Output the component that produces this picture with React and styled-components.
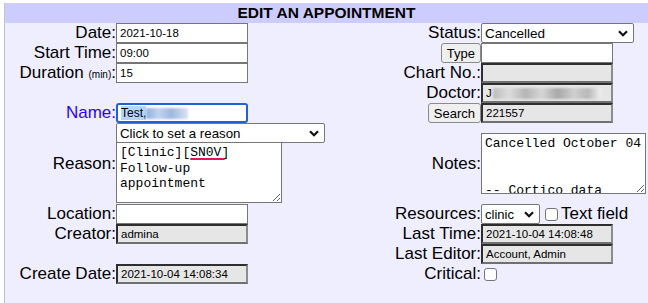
import styled, { createGlobalStyle } from "styled-components";

const Global = createGlobalStyle`
  body {
    margin: 0;
    background: #ffffff;
    font-family: "Liberation Sans", Arial, sans-serif;
    overflow: hidden;
  }
`;

const Page = styled.div`
  padding: 3px 0 0 4px;
`;

const Panel = styled.div`
  border-left: 1px solid #c4c4c4;
  background: #eeeeff;
  min-height: 320px;
`;

const Header = styled.div`
  height: 20px;
  background: #ccccff;
  font-weight: bold;
  font-size: 15.5px;
  line-height: 20px;
  text-align: center;
`;

const Form = styled.div`
  display: grid;
  grid-template-columns: 111px 215px 150px 1fr;
  grid-auto-rows: minmax(20px, auto);
  align-items: center;
`;

const Label = styled.div`
  height: 20px;
  text-align: right;
  font-size: 17px;
  line-height: 20px;
  color: ${(p) => (p.$accent ? "#2a00ff" : "#000")};
  white-space: nowrap;
`;

const Small = styled.span`
  font-size: 10px;
  line-height: 0;
`;

const Field = styled.div`
  display: flex;
  flex-direction: ${(p) => (p.$stack ? "column" : "row")};
  align-items: ${(p) => (p.$stack ? "flex-start" : "center")};
`;

const Input = styled.input`
  box-sizing: border-box;
  width: ${(p) => p.$w || 132}px;
  height: 20px;
  margin: 0;
  padding: 0 3px;
  font-family: "Liberation Sans", Arial, sans-serif;
  font-size: 11.5px;
  color: #000;
  background: #fff;
  border: 1px solid #767676;
  outline: none;
`;

const ReadOnly = styled.div`
  box-sizing: border-box;
  width: 132px;
  height: 20px;
  padding: 0 3px;
  display: flex;
  align-items: center;
  gap: 1px;
  font-size: 11.5px;
  background: #e6e6e6;
  border: 2px solid;
  border-color: #2e2e2e #8c8c8c #707070 #2e2e2e;
  white-space: nowrap;
  overflow: hidden;
`;

const NameBox = styled.div`
  box-sizing: border-box;
  width: 132px;
  height: 20px;
  padding: 0 3px;
  display: flex;
  align-items: center;
  font-size: 12px;
  background: #fff;
  border: 2px solid #1c63d6;
  border-radius: 3px;
`;

const Selected = styled.span`
  background: #b7d4fb;
  display: flex;
  align-items: center;
  height: 14px;
`;

const Blur = styled.span`
  display: inline-block;
  width: ${(p) => p.$w}px;
  height: 11px;
  background: ${(p) =>
    p.$blue
      ? "linear-gradient(90deg,#8fb0e0 0%,#c0d4f0 30%,#9eb8de 60%,#d8e4f6 100%)"
      : "linear-gradient(90deg,#bdbdbd 0%,#dcdcdc 15%,#b5b5b5 30%,#d6d6d6 45%,#a8a8a8 60%,#cfcfcf 75%,#b8b8b8 88%,#f0f0f0 100%)"};
  filter: blur(1.2px);
`;

const SelectWrap = styled.div`
  position: relative;
  width: ${(p) => p.$w}px;
  height: 20px;
`;

const Select = styled.select`
  appearance: none;
  box-sizing: border-box;
  width: 100%;
  height: 20px;
  margin: 0;
  padding: 0 3px;
  font-family: "Liberation Sans", Arial, sans-serif;
  font-size: ${(p) => p.$fs || 13.5}px;
  color: #000;
  background: #fff;
  border: 1px solid #767676;
  border-radius: 2px;
  outline: none;
`;

const Chevron = styled.svg`
  position: absolute;
  right: 6px;
  top: 7px;
  pointer-events: none;
`;

const Area = styled.textarea`
  box-sizing: border-box;
  display: block;
  width: ${(p) => p.$w}px;
  height: 61px;
  margin: ${(p) => (p.$joined ? "-1px 0 1px" : "0")};
  padding: 2px 3px;
  font-family: "Liberation Mono", "Courier New", monospace;
  font-size: 13px;
  line-height: 15.5px;
  color: #000;
  background: #fff;
  border: 1px solid #767676;
  overflow: hidden;
  outline: none;
  resize: both;
`;

const AreaWrap = styled.div`
  position: relative;
`;

const Squiggle = styled.span`
  position: absolute;
  left: 74px;
  top: 15px;
  width: 35px;
  height: 2px;
  border-radius: 1px;
  background: #e5135c;
`;

const Button = styled.button`
  box-sizing: border-box;
  height: 20px;
  margin: 0;
  padding: 0 5px;
  font-family: "Liberation Sans", Arial, sans-serif;
  font-size: 13px;
  color: #000;
  background: #efefef;
  border: 1px solid #8a8a8a;
  border-radius: 3px;
`;

const ButtonCell = styled.div`
  display: flex;
  justify-content: flex-end;
`;

const Check = styled.input`
  appearance: none;
  box-sizing: border-box;
  width: 13px;
  height: 13px;
  margin: 0 ${(p) => (p.$gap ? 3 : 0)}px 0 ${(p) => p.$left || 0}px;
  background: #fff;
  border: 1px solid #767676;
  border-radius: 3px;
`;

const Inline = styled.span`
  font-size: 17px;
  line-height: 20px;
`;

const Empty = styled.div``;

function Chev() {
  return (
    <Chevron width="10" height="7" viewBox="0 0 10 7">
      <polyline points="1,1.2 5,5.2 9,1.2" fill="none" stroke="#111" strokeWidth="2.2" />
    </Chevron>
  );
}

export default function App() {
  return (
    <Page>
      <Global />
      <Panel>
        <Header>EDIT AN APPOINTMENT</Header>
        <Form>
          <Label>Date:</Label>
          <Field><Input defaultValue="2021-10-18" /></Field>
          <Label>Status:</Label>
          <Field>
            <SelectWrap $w={153}>
              <Select><option>Cancelled</option></Select>
              <Chev />
            </SelectWrap>
          </Field>

          <Label>Start Time:</Label>
          <Field><Input defaultValue="09:00" /></Field>
          <ButtonCell><Button>Type</Button></ButtonCell>
          <Field><Input defaultValue="" /></Field>

          <Label>Duration <Small>(min)</Small>:</Label>
          <Field><Input defaultValue="15" /></Field>
          <Label>Chart No.:</Label>
          <Field><ReadOnly /></Field>

          <Empty />
          <Empty />
          <Label>Doctor:</Label>
          <Field><ReadOnly>J<Blur $w={108} /></ReadOnly></Field>

          <Label $accent>Name:</Label>
          <Field>
            <NameBox>
              <Selected>Test,</Selected>
              <Blur $w={42} $blue />
            </NameBox>
          </Field>
          <ButtonCell><Button>Search</Button></ButtonCell>
          <Field><ReadOnly>221557</ReadOnly></Field>

          <Label>Reason:</Label>
          <Field $stack>
            <SelectWrap $w={209}>
              <Select $fs={13.3}><option>Click to set a reason</option></Select>
              <Chev />
            </SelectWrap>
            <AreaWrap>
              <Area
                $w={166}
                $joined
                spellCheck={false}
                defaultValue={"[Clinic][SN0V]\nFollow-up\nappointment"}
              />
              <Squiggle />
            </AreaWrap>
          </Field>
          <Label>Notes:</Label>
          <Field>
            <Area
              $w={165}
              spellCheck={false}
              defaultValue={"Cancelled October 04\n\n\n-- Cortico data"}
            />
          </Field>

          <Label>Location:</Label>
          <Field><Input defaultValue="" /></Field>
          <Label>Resources:</Label>
          <Field>
            <SelectWrap $w={59}>
              <Select $fs={13}><option>clinic</option></Select>
              <Chev />
            </SelectWrap>
            <Check type="checkbox" $left={5} $gap />
            <Inline>Text field</Inline>
          </Field>

          <Label>Creator:</Label>
          <Field><ReadOnly>admina</ReadOnly></Field>
          <Label>Last Time:</Label>
          <Field><ReadOnly>2021-10-04 14:08:48</ReadOnly></Field>

          <Empty />
          <Empty />
          <Label>Last Editor:</Label>
          <Field><ReadOnly>Account, Admin</ReadOnly></Field>

          <Label>Create Date:</Label>
          <Field><ReadOnly>2021-10-04 14:08:34</ReadOnly></Field>
          <Label>Critical:</Label>
          <Field><Check type="checkbox" $left={3} /></Field>
        </Form>
      </Panel>
    </Page>
  );
}
